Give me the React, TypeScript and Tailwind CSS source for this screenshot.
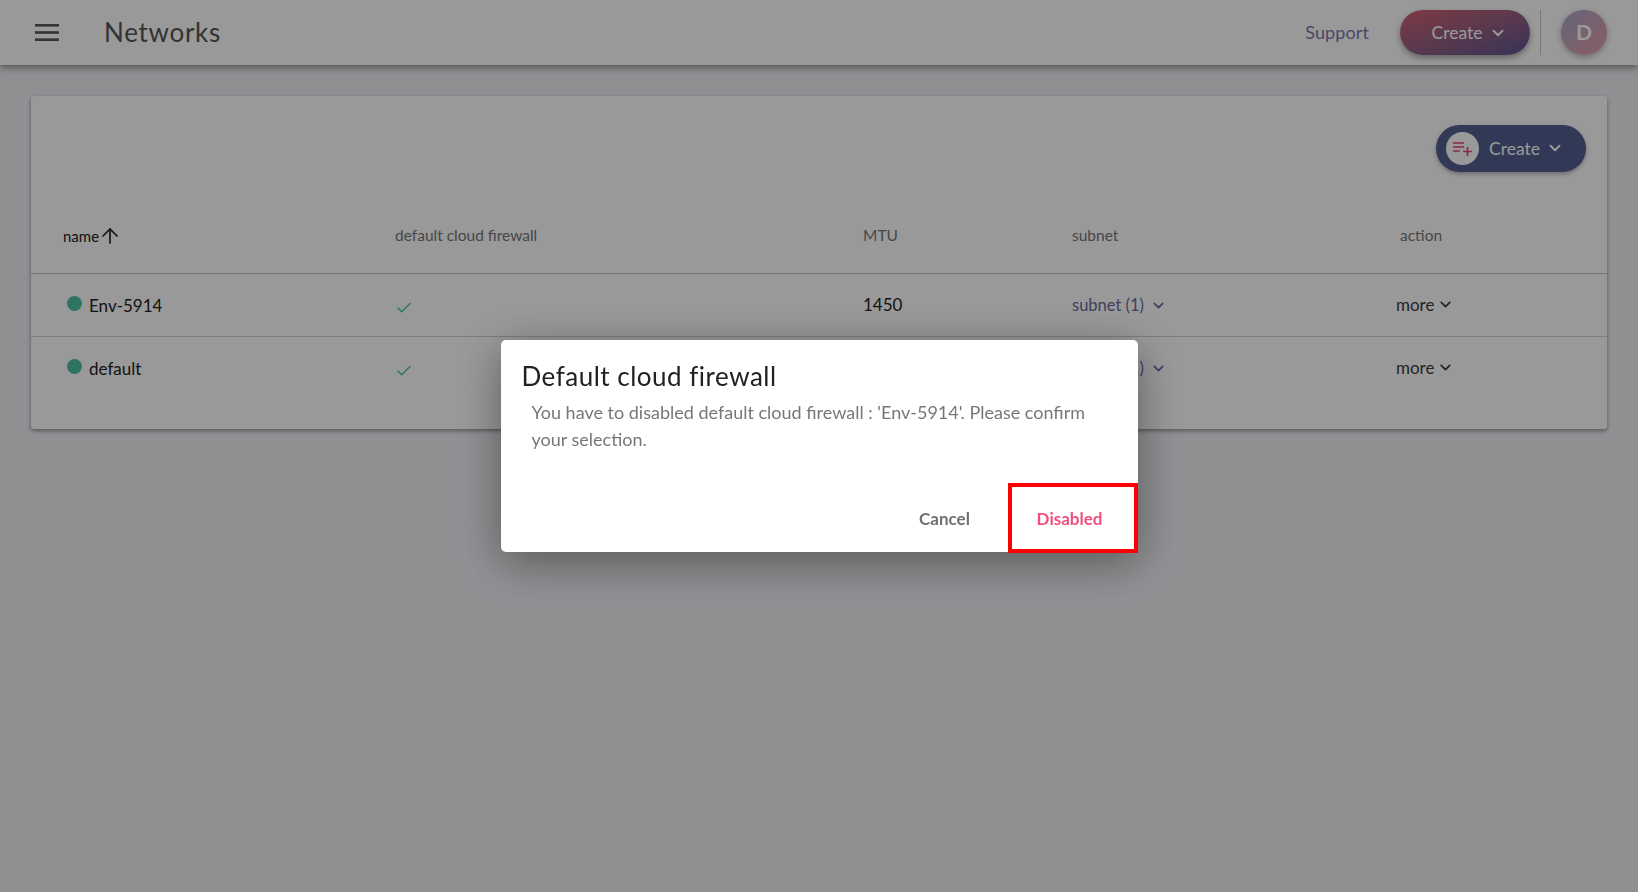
import { ArrowUp, Check, ChevronDown } from "lucide-react";

const Row = ({ name, last }: { name: string; last?: boolean }) => (
  <div className={`grid grid-cols-[364px_468px_209px_328px_1fr] h-[63px] text-[17px] text-[#222] ${last ? "" : "border-b border-[#d0d0d0]"}`}>
    <div className="flex items-start pt-[20px] pl-[36px]">
      <span className="w-[15px] h-[15px] rounded-full bg-[#4cc4a4] mr-[7px] mt-[2px] shrink-0" />
      <span className="leading-[24px]">{name}</span>
    </div>
    <div className="pt-[25px]">
      <Check size={18} strokeWidth={2} className="text-[#4cc4a4]" />
    </div>
    <div className="pt-[20px] leading-[22px]">1450</div>
    <div className="flex items-start pt-[20px] leading-[22px] text-[16.5px] text-[#6a6a9e]">
      subnet (1)
      <ChevronDown size={17} strokeWidth={2.4} className="ml-[6px] mt-[3px]" />
    </div>
    <div className="flex items-start pt-[20px] -ml-[4px] leading-[22px] text-[#3c3c48]">
      more
      <ChevronDown size={17} strokeWidth={2.4} className="ml-[3px] mt-[2px]" />
    </div>
  </div>
);

export default function App() {
  return (
    <div className="min-h-[892px] bg-[#f0f1f6] font-['Lato','Liberation_Sans',sans-serif] relative">
      <header className="h-[65px] bg-white shadow-[0_2px_8px_rgba(0,0,0,0.5)] flex items-center pl-[35px] pr-[31px]">
        <svg width="24" height="17" viewBox="0 0 24 17" fill="#555" className="shrink-0">
          <rect x="0" y="0" width="24" height="2.6" />
          <rect x="0" y="7.2" width="24" height="2.6" />
          <rect x="0" y="14.4" width="24" height="2.6" />
        </svg>
        <h1 className="ml-[45px] text-[26px] font-normal tracking-[0.7px] text-[#555]">Networks</h1>
        <div className="ml-auto flex items-center">
          <span className="text-[18px] tracking-[0.1px] text-[#7a7aa8] mr-[31px]">Support</span>
          <button className="w-[130px] h-[45px] rounded-full bg-gradient-to-br from-[#d2606e] to-[#5a5590] text-white text-[17.5px] flex items-center justify-center gap-[7px] pl-[9px] shadow-[0_3px_6px_rgba(0,0,0,0.35)]">
            <span className="mt-[1px]">Create</span>
            <ChevronDown size={18} strokeWidth={2.6} />
          </button>
          <div className="w-px h-[45px] bg-[#ccc] ml-[10px] mr-[20px]" />
          <div className="w-[46px] h-[45px] rounded-full bg-gradient-to-br from-[#a9aacb] to-[#e09aa5] text-white font-bold text-[21px] pb-[2px] flex items-center justify-center shadow-[0_2px_6px_rgba(0,0,0,0.3)]">
            D
          </div>
        </div>
      </header>

      <main className="pt-[31px] px-[31px]">
        <section className="bg-white rounded-[3px] shadow-[0_2px_4px_rgba(0,0,0,0.4)] h-[333px]">
          <div className="flex justify-end h-[129px] pt-[29px] pr-[21px]">
            <button className="w-[150px] h-[47px] rounded-full bg-[#52608f] flex items-center text-white text-[17.5px] pl-[10px] shadow-[0_2px_4px_rgba(0,0,0,0.3)]">
              <span className="w-[33px] h-[33px] rounded-full bg-white flex items-center justify-center">
                <svg width="19" height="14" viewBox="0 0 19 14" fill="none" stroke="#f0407c" strokeWidth="1.7">
                  <path d="M0 1h11M0 5h11M0 9h7M10 9.5h9M14.5 5v9" />
                </svg>
              </span>
              <span className="ml-[10px] mt-[1px]">Create</span>
              <ChevronDown size={18} strokeWidth={2.6} className="ml-[6px] -mt-[2px]" />
            </button>
          </div>
          <div className="grid grid-cols-[364px_468px_209px_328px_1fr] h-[49px] border-b border-[#c4c4c4] text-[15.5px] leading-[20px] text-[#777]">
            <div className="flex items-start pl-[32px] pt-[1px] text-[#222] text-[15px]">
              name
              <ArrowUp size={24} strokeWidth={1.7} className="-mt-[2px] -ml-[1px]" />
            </div>
            <div>default cloud firewall</div>
            <div>MTU</div>
            <div>subnet</div>
            <div>action</div>
          </div>
          <Row name="Env-5914" />
          <Row name="default" last />
        </section>
      </main>

      <div className="fixed inset-0 bg-black/40 flex items-center justify-center">
        <div className="w-[637px] h-[212px] bg-white rounded-[5px] shadow-[0_10px_45px_rgba(0,0,0,0.4)] flex flex-col">
          <h2 className="mt-[21px] ml-[21px] text-[26px] leading-[30px] font-normal tracking-[0.5px] text-[#222]">Default cloud firewall</h2>
          <p className="mt-[8px] ml-[31px] mr-[40px] text-[18px] leading-[27px] text-[#777]">
            You have to disabled default cloud firewall : 'Env-5914'. Please confirm your selection.
          </p>
          <div className="mt-auto flex justify-end items-stretch h-[70px] -mb-px">
            <button className="w-[114px] text-[17px] font-bold text-[#707070] pr-[12px] pt-[2px]">Cancel</button>
            <button className="w-[130px] border-[4px] border-[#ff0000] text-[17px] font-bold text-[#f0507e] pr-[6px] pt-[2px]">Disabled</button>
          </div>
        </div>
      </div>
    </div>
  );
}
